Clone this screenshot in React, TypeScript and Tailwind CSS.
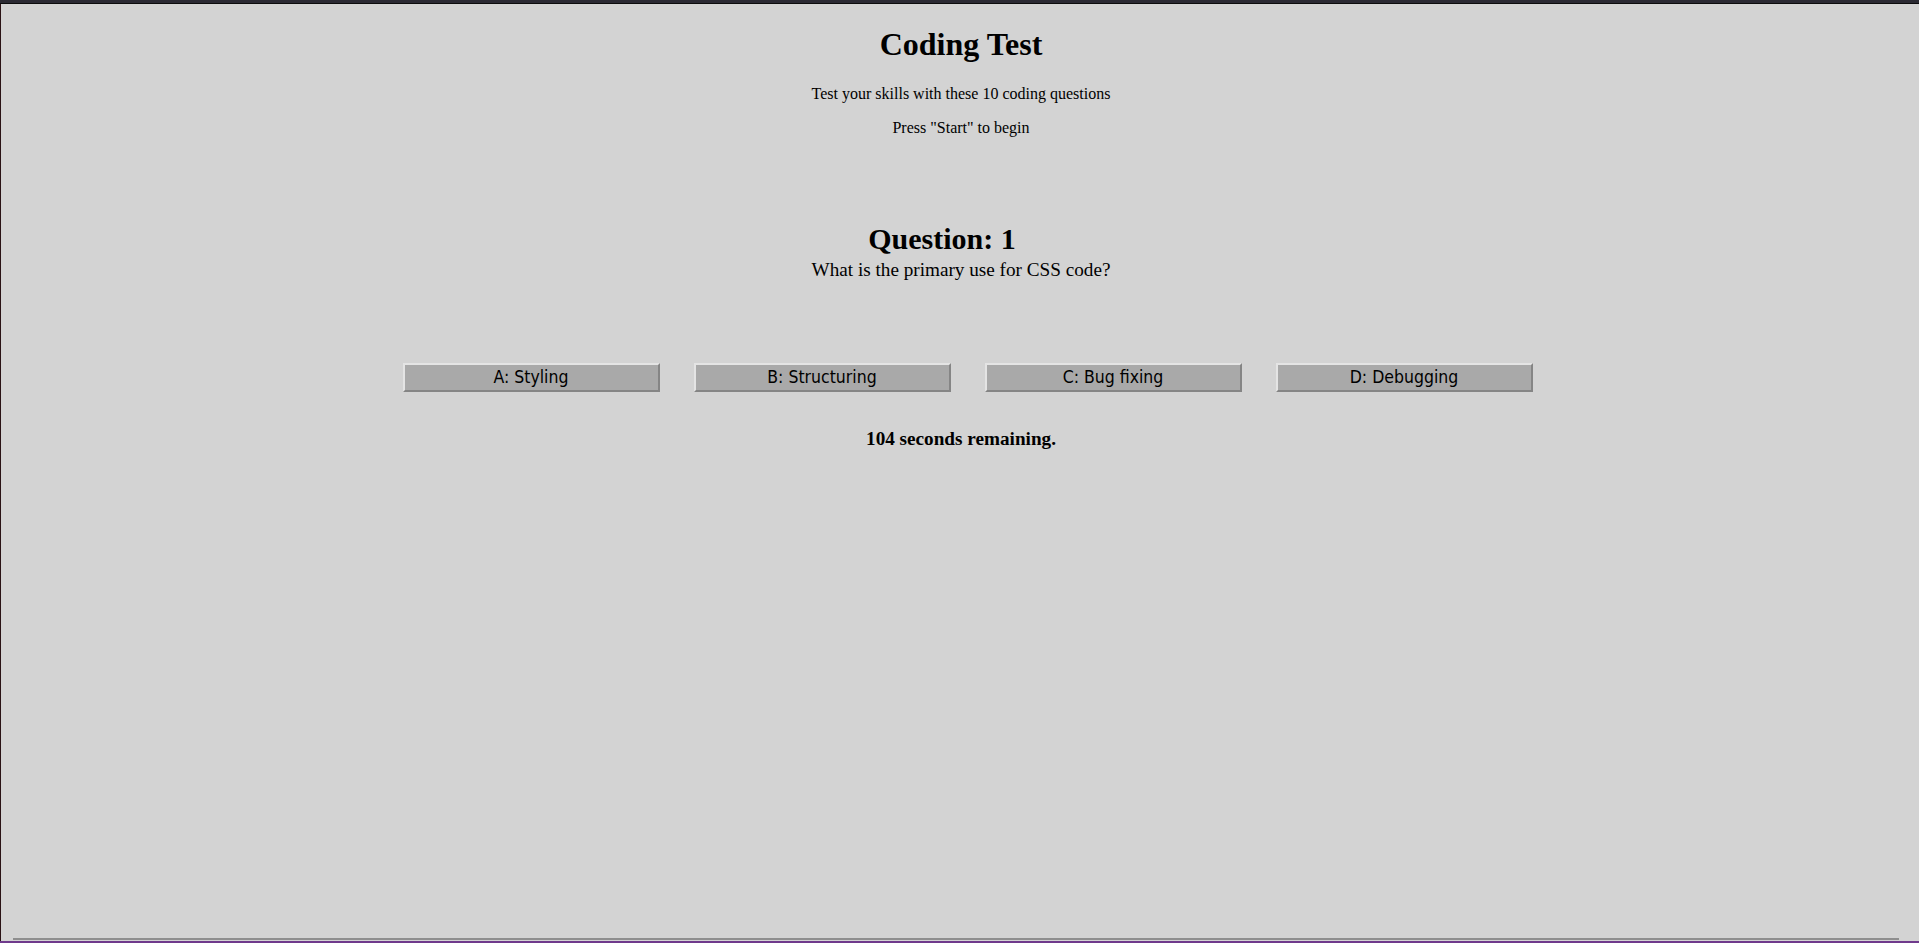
const answers = ["A: Styling", "B: Structuring", "C: Bug fixing", "D: Debugging"];

export default function App() {
  return (
    <div className="h-[943px] flex flex-col bg-[#d3d3d3] text-black overflow-hidden font-['Liberation_Serif','Times_New_Roman',serif]">
      <div className="h-[3px] bg-[#2b2a33]" />
      <div className="h-px bg-[#0c0c0d]" />
      <div className="flex-1 flex min-h-0">
        <div className="w-px bg-[#2a1214]" />
        <div className="flex-1 flex flex-col min-w-0">
          <main className="flex-1 text-center pl-[2px]">
            <h1 className="mt-[22px] text-[32px] leading-[37px] font-bold">Coding Test</h1>
            <p className="mt-[22px] text-[16px] leading-[18px]">Test your skills with these 10 coding questions</p>
            <p className="mt-[16px] text-[16px] leading-[18px]">Press "Start" to begin</p>

            <h2 className="mt-[85px] pr-[38px] text-[30px] leading-[33px] font-bold">Question: 1</h2>
            <p className="mt-[4px] text-[19.2px] leading-[22px]">What is the primary use for CSS code?</p>

            <div className="mt-[82px] flex justify-center gap-[34px] pl-[13px]">
              {answers.map((a) => (
                <button
                  key={a}
                  className="w-[257px] h-[29px] bg-[#a9a9a9] border-2 border-t-[#e4e4e4] border-l-[#e4e4e4] border-r-[#858585] border-b-[#858585] text-[17.5px] leading-[21px] text-black font-['DejaVu_Sans_Condensed','Noto_Sans',sans-serif]"
                >
                  {a}
                </button>
              ))}
            </div>

            <p className="mt-[36px] text-[19.2px] leading-[22px] font-bold">104 seconds remaining.</p>
          </main>
          <div className="ml-[12px] mr-[20px] h-[2px] bg-[#8e8e8e]" />
          <div className="h-px" />
        </div>
      </div>
      <div className="h-[2px] bg-[#6f3a8c]" />
    </div>
  );
}
